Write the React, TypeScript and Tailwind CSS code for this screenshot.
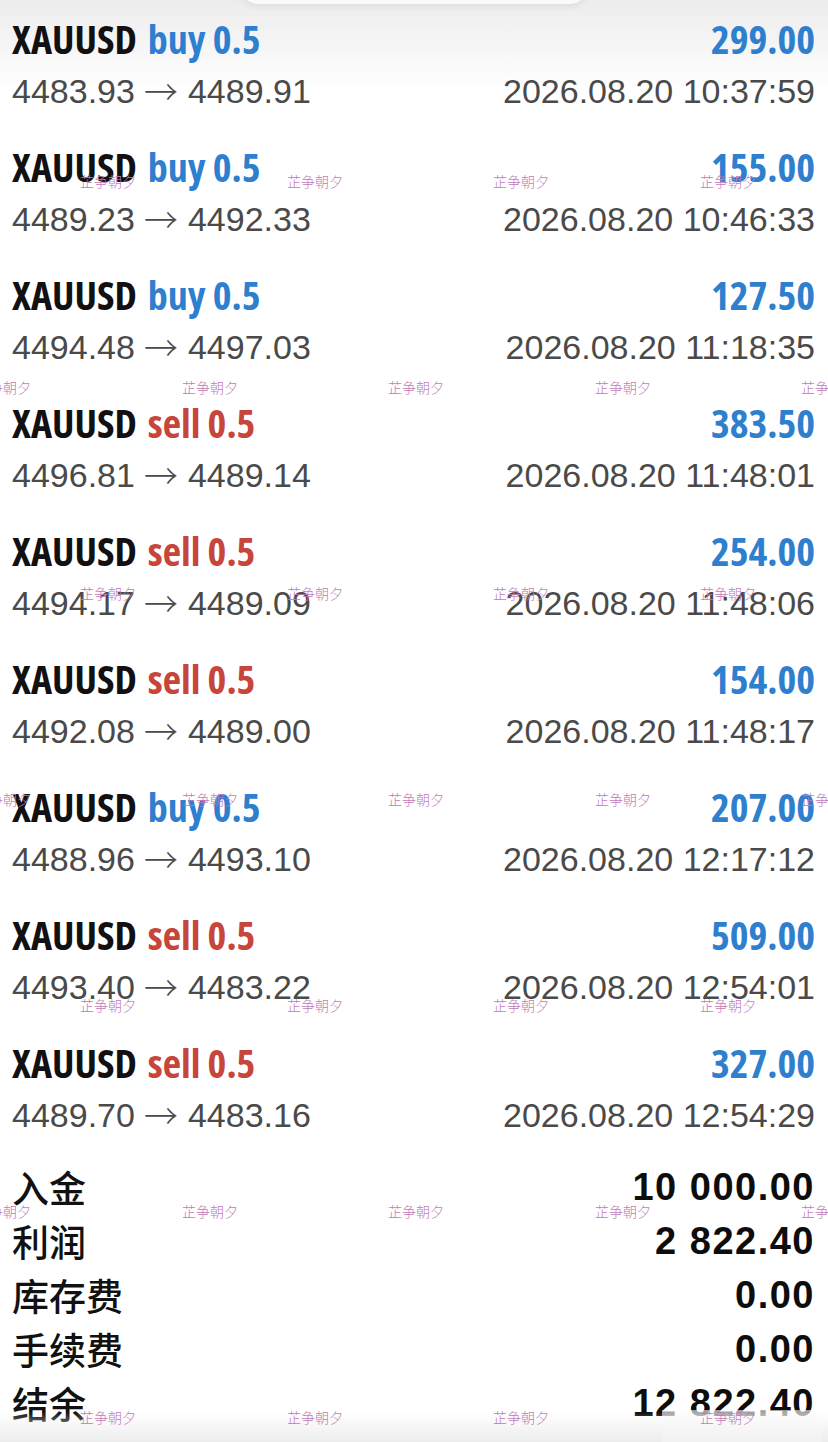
import React from "react";

type Trade = { side: "buy" | "sell"; open: string; close: string; profit: string; time: string };

const trades: Trade[] = [
  { side: "buy", open: "4483.93", close: "4489.91", profit: "299.00", time: "2026.08.20 10:37:59" },
  { side: "buy", open: "4489.23", close: "4492.33", profit: "155.00", time: "2026.08.20 10:46:33" },
  { side: "buy", open: "4494.48", close: "4497.03", profit: "127.50", time: "2026.08.20 11:18:35" },
  { side: "sell", open: "4496.81", close: "4489.14", profit: "383.50", time: "2026.08.20 11:48:01" },
  { side: "sell", open: "4494.17", close: "4489.09", profit: "254.00", time: "2026.08.20 11:48:06" },
  { side: "sell", open: "4492.08", close: "4489.00", profit: "154.00", time: "2026.08.20 11:48:17" },
  { side: "buy", open: "4488.96", close: "4493.10", profit: "207.00", time: "2026.08.20 12:17:12" },
  { side: "sell", open: "4493.40", close: "4483.22", profit: "509.00", time: "2026.08.20 12:54:01" },
  { side: "sell", open: "4489.70", close: "4483.16", profit: "327.00", time: "2026.08.20 12:54:29" },
];

const summary = [
  { label: "入金", value: "10 000.00" },
  { label: "利润", value: "2 822.40" },
  { label: "库存费", value: "0.00" },
  { label: "手续费", value: "0.00" },
  { label: "结余", value: "12 822.40" },
];

const condensed = { fontFamily: '"Open Sans", "DejaVu Sans Condensed", sans-serif' };
const sans = { fontFamily: '"Liberation Sans", Arial, sans-serif' };
const cjk = { fontFamily: '"Noto Sans CJK SC", "Noto Sans", sans-serif' };

const wmRows = [
  { y: 181, xs: [80, 287, 493, 700] },
  { y: 387, xs: [-25, 182, 388, 595, 801] },
  { y: 593, xs: [80, 287, 493, 700] },
  { y: 799, xs: [-25, 182, 388, 595, 801] },
  { y: 1005, xs: [80, 287, 493, 700] },
  { y: 1211, xs: [-25, 182, 388, 595, 801] },
  { y: 1417, xs: [80, 287, 493, 700] },
];

export default function App() {
  return (
    <div className="relative w-[828px] h-[1442px] overflow-hidden bg-white">
      {/* top shading */}
      <div className="absolute left-0 top-0 w-full h-[90px] bg-gradient-to-b from-[#ececec] to-white" />
      <div className="absolute left-[240px] top-[-40px] w-[348px] h-[45px] rounded-b-[18px] bg-[#fafafa] border border-[#e2e2e2] shadow-[0_2px_6px_rgba(0,0,0,0.06)]" />

      <div className="relative flex flex-col pl-[12px] pr-[13px] pt-[13px]">
        <div className="flex flex-col gap-[24px]">
          {trades.map((t, i) => (
            <div key={i} className="flex flex-col">
              <div className="flex h-[52px] items-center justify-between">
                <div className="flex items-center gap-[11px] font-stretch-condensed font-bold text-[40px] leading-none" style={condensed}>
                  <span className="text-[#111111]">XAUUSD</span>
                  <span className={t.side === "buy" ? "text-[#2f7fcf]" : "text-[#c7453b]"}>
                    {t.side} 0.5
                  </span>
                </div>
                <span className="font-stretch-condensed font-bold text-[40px] leading-none text-[#2f7fcf]" style={condensed}>
                  {t.profit}
                </span>
              </div>
              <div className="flex h-[52px] items-center justify-between text-[34px] leading-none text-[#4a4a4a]" style={sans}>
                <span className="flex items-center">
                  <span>{t.open}</span>
                  <span className="ml-[9px] mr-[10px] font-light" style={cjk}>→</span>
                  <span>{t.close}</span>
                </span>
                <span>{t.time}</span>
              </div>
            </div>
          ))}
        </div>

        <div className="mt-[19px] flex flex-col">
          {summary.map((s, i) => (
            <div key={i} className="flex h-[54px] items-center justify-between">
              <span className="text-[37px] font-medium leading-none text-[#111111]" style={cjk}>
                {s.label}
              </span>
              <span className="text-[38px] font-bold leading-none tracking-[1.5px] text-[#0d0d0d]" style={sans}>
                {s.value}
              </span>
            </div>
          ))}
        </div>
      </div>

      {/* bottom shading */}
      <div className="absolute left-0 bottom-0 w-full h-[30px] bg-gradient-to-b from-white/0 to-[#ededed]" />
      <div className="absolute left-[662px] top-[1410px] w-[160px] h-[32px] bg-gradient-to-b from-white/60 to-[#f2f2f2]/95" />

      {/* watermark */}
      {wmRows.map((r) =>
        r.xs.map((x) => (
          <span
            key={`${r.y}-${x}`}
            className="absolute text-[14px] leading-none font-light text-[#c27ab8] whitespace-nowrap"
            style={{ ...cjk, left: x, top: r.y - 7 }}
          >
            芷争朝夕
          </span>
        ))
      )}
    </div>
  );
}
